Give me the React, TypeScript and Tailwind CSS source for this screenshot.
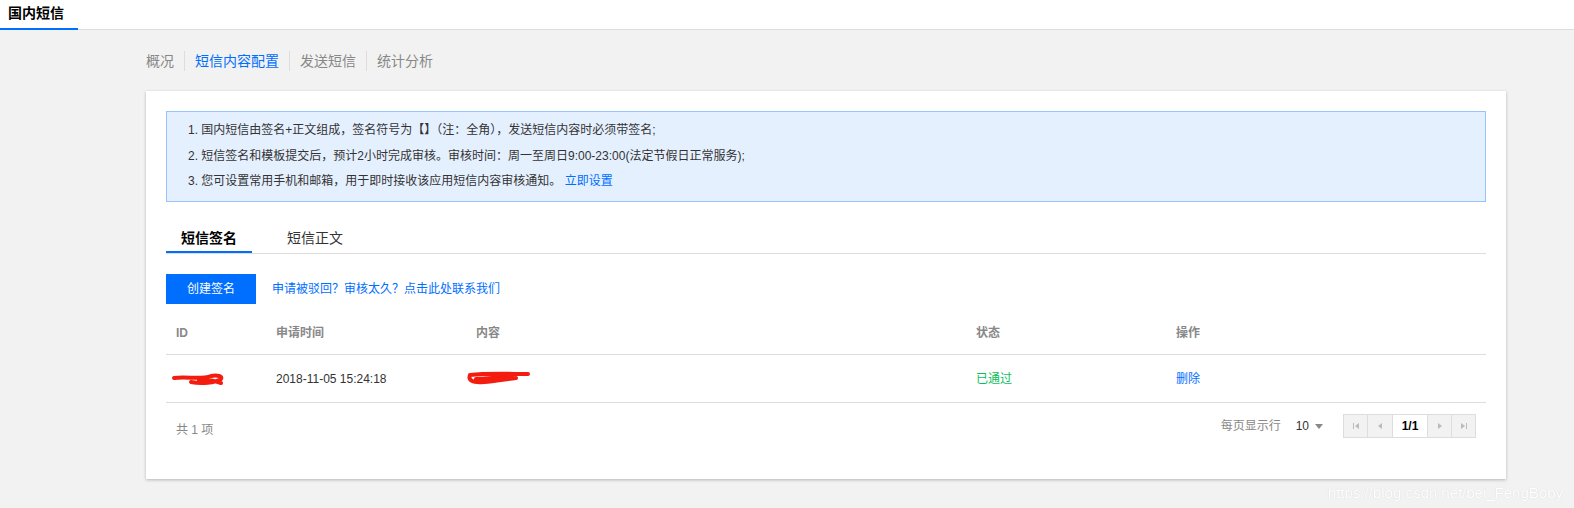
import React from 'react';

const font = { fontFamily: '"Liberation Sans", "Noto Sans CJK SC", sans-serif' };

const subNav = ['概况', '短信内容配置', '发送短信', '统计分析'];

function Scribble({ w, h, d }: { w: number; h: number; d: string }) {
    return (
        <svg width={w} height={h} viewBox={`0 0 ${w} ${h}`} className="block">
            <path d={d} fill="none" stroke="#f31c0f" strokeWidth="4" strokeLinecap="round" strokeLinejoin="round" />
        </svg>
    );
}

function PagerBtn({ children, className }: { children: React.ReactNode; className: string }) {
    return (
        <div className={`h-full flex items-center justify-center border-l border-[#ddd] first:border-l-0 ${className}`}>
            {children}
        </div>
    );
}

export default function App() {
    return (
        <div className="w-full h-[508px] bg-[#f2f2f2] text-[#333] relative overflow-hidden" style={font}>
            {/* top tab bar */}
            <div className="h-[30px] bg-white border-b border-[#ddd] flex">
                <div className="w-[78px] h-[30px] border-b-2 border-[#006eff] text-[14px] font-bold text-black pl-2 leading-[26px]">
                    国内短信
                </div>
            </div>

            {/* sub nav */}
            <div className="flex items-center pl-[146px] pt-[21px] h-[41px]">
                {subNav.map((item, i) => (
                    <div key={item} className="flex items-center text-[14px]">
                        {i > 0 && <span className="w-px h-[20px] bg-[#ddd] mx-[10px]" />}
                        <span className={i === 1 ? 'text-[#006eff]' : 'text-[#888]'}>{item}</span>
                    </div>
                ))}
            </div>

            {/* card */}
            <div className="ml-[146px] mt-[20px] w-[1360px] h-[388px] bg-white shadow-[0_1px_3px_rgba(0,0,0,0.25)] p-5">
                <div className="h-[91px] bg-[#e5f0ff] border border-[#97c3ff] pl-[21px] pt-[6px] text-[12px] text-[#333] leading-[25.5px]">
                    <p>1. 国内短信由签名+正文组成，签名符号为【】（注：全角），发送短信内容时必须带签名;</p>
                    <p>2. 短信签名和模板提交后，预计2小时完成审核。审核时间：周一至周日9:00-23:00(法定节假日正常服务);</p>
                    <p>
                        3. 您可设置常用手机和邮箱，用于即时接收该应用短信内容审核通知。 <span className="text-[#006eff]">立即设置</span>
                    </p>
                </div>

                {/* tabs */}
                <div className="mt-[24px] h-[28px] border-b border-[#ddd] flex text-[14px]">
                    <div className="w-[86px] h-[27px] border-b-2 border-[#006eff] text-center font-bold text-black leading-[24px]">短信签名</div>
                    <div className="ml-[35px] text-[#333] leading-[24px]">短信正文</div>
                </div>

                {/* actions */}
                <div className="mt-[20px] flex items-center">
                    <button className="w-[90px] h-[30px] bg-[#006eff] text-white text-[12px]">创建签名</button>
                    <span className="ml-4 text-[12px] text-[#006eff]">申请被驳回？审核太久？点击此处联系我们</span>
                </div>

                {/* table */}
                <div className="mt-[7px] text-[12px]">
                    <div className="grid grid-cols-[100px_200px_500px_200px_1fr] h-[44px] items-center border-b border-[#ddd] text-[#888] font-bold">
                        <div className="pl-[10px]">ID</div>
                        <div className="pl-[10px]">申请时间</div>
                        <div className="pl-[10px]">内容</div>
                        <div className="pl-[10px]">状态</div>
                        <div className="pl-[10px]">操作</div>
                    </div>
                    <div className="grid grid-cols-[100px_200px_500px_200px_1fr] h-[48px] items-center border-b border-[#ddd] text-[#333]">
                        <div className="pl-[5px]">
                            <Scribble w={55} h={16} d="M3 7 C15 5 30 9 40 5 C46 4 52 5 50 8 C44 12 30 13 20 11 M28 9 C36 8 44 10 50 12" />
                        </div>
                        <div className="pl-[10px]">2018-11-05 15:24:18</div>
                        <div>
                            <Scribble w={66} h={18} d="M4 5 C20 3 45 4 62 4 M4 5 C2 10 6 13 18 12 C30 11 40 9 50 8 M10 9 C22 8 36 8 46 6" />
                        </div>
                        <div className="pl-[10px] text-[#0abf5b]">已通过</div>
                        <div className="pl-[10px] text-[#006eff]">删除</div>
                    </div>

                    {/* footer */}
                    <div className="flex items-center justify-between mt-[11px] h-[24px]">
                        <span className="pl-[10px] text-[#888] mt-[8px]">共 1 项</span>
                        <div className="flex items-center pr-[10px]">
                            <span className="text-[#888]">每页显示行</span>
                            <span className="ml-[15px] text-[#333]">10</span>
                            <span className="ml-[6px] w-0 h-0 border-l-[4px] border-r-[4px] border-t-[5px] border-l-transparent border-r-transparent border-t-[#888]" />
                            <div className="ml-[20px] h-[24px] flex border border-[#ddd]">
                                <PagerBtn className="w-[23px] bg-[#f2f2f2]">
                                    <svg width="8" height="8" viewBox="0 0 8 8"><rect x="1" y="1" width="1" height="6" fill="#bbb" /><path d="M7 1 L3 4 L7 7 Z" fill="#bbb" /></svg>
                                </PagerBtn>
                                <PagerBtn className="w-[25px] bg-[#f2f2f2]">
                                    <svg width="8" height="8" viewBox="0 0 8 8"><path d="M6 1 L2 4 L6 7 Z" fill="#bbb" /></svg>
                                </PagerBtn>
                                <PagerBtn className="w-[35px] bg-white">
                                    <span className="font-bold text-black">1/1</span>
                                </PagerBtn>
                                <PagerBtn className="w-[24px] bg-[#f2f2f2]">
                                    <svg width="8" height="8" viewBox="0 0 8 8"><path d="M2 1 L6 4 L2 7 Z" fill="#bbb" /></svg>
                                </PagerBtn>
                                <PagerBtn className="w-[24px] bg-[#f2f2f2]">
                                    <svg width="8" height="8" viewBox="0 0 8 8"><path d="M1 1 L5 4 L1 7 Z" fill="#bbb" /><rect x="6" y="1" width="1" height="6" fill="#bbb" /></svg>
                                </PagerBtn>
                            </div>
                        </div>
                    </div>
                </div>
            </div>

            {/* watermark */}
            <div className="absolute right-[11px] bottom-[6px] whitespace-nowrap text-[15px] leading-[18px] text-white [text-shadow:0_0_1px_rgba(0,0,0,0.15)]" style={{ fontFamily: '"Liberation Sans", sans-serif' }}>
                https://blog.csdn.net/bei_FengBoby
            </div>
        </div>
    );
}
